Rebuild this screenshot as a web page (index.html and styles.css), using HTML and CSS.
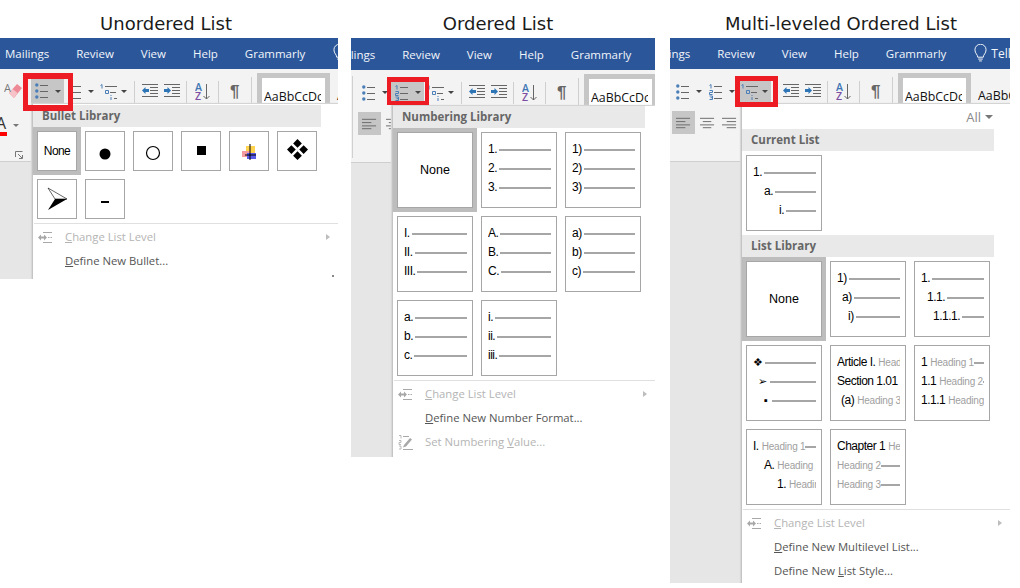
FILE: index.html
```html
<!DOCTYPE html>
<html lang="en">
<head>
<meta charset="utf-8">
<title>Word list menus</title>
<link rel="stylesheet" href="styles.css">
</head>
<body>
<svg class="sprite" width="0" height="0" aria-hidden="true">
  <symbol id="ic-bullets" viewBox="0 0 13 16">
    <circle cx="1.800" cy="2" r="1.700" fill="#4a7fb8"/><circle cx="1.800" cy="8" r="1.700" fill="#4a7fb8"/><circle cx="1.800" cy="14" r="1.700" fill="#4a7fb8"/>
    <path d="M5 2.500h8M5 8.500h8M5 14.500h8" stroke="#666" stroke-width="1"/>
  </symbol>
  <symbol id="ic-num" viewBox="0 0 13 16">
    <path d="M.5 1.500l1.500-1v4M.5 6.500h3v2h-3v2h3M.5 12h3v3.500h-3M1.500 13.700h2" fill="none" stroke="#4a7fb8" stroke-width="1"/>
    <path d="M5 2.500h8M5 8.500h8M5 14.500h8" stroke="#666" stroke-width="1"/>
  </symbol>
  <symbol id="ic-multi" viewBox="0 0 18 16">
    <path d="M.5 1.500l1.500-1v4" fill="none" stroke="#4a7fb8" stroke-width="1"/>
    <path d="M5.500 6.500h3v3h-3z" fill="none" stroke="#4a7fb8" stroke-width="1"/>
    <path d="M11 11v1M11 13v3" stroke="#4a7fb8" stroke-width="1"/>
    <path d="M5 2.500h12M10 8.500h6M14 14.500h3" stroke="#666" stroke-width="1"/>
  </symbol>
  <symbol id="ic-outdent" viewBox="0 0 16 13">
    <path d="M0 .5h16M0 12.500h16M8 3.500h8M8 6.500h8M8 9.500h8" stroke="#666" stroke-width="1"/>
    <path d="M0 6.500l3.500-3.500v2H7v3H3.500v2z" fill="#2e75b6"/>
  </symbol>
  <symbol id="ic-indent" viewBox="0 0 16 13">
    <path d="M0 .5h16M0 12.500h16M8 3.500h8M8 6.500h8M8 9.500h8" stroke="#666" stroke-width="1"/>
    <path d="M7 6.500L3.500 3v2H0v3h3.500v2z" fill="#2e75b6"/>
  </symbol>
  <symbol id="ic-left" viewBox="0 0 16 12">
    <path d="M0 1h15M0 4.500h10M0 8h15M0 11h10" stroke="#666" stroke-width="1"/>
  </symbol>
  <symbol id="ic-center" viewBox="0 0 16 12">
    <path d="M0 1h15M3 4.500h9M0 8h15M3 11h9" stroke="#666" stroke-width="1"/>
  </symbol>
  <symbol id="ic-right" viewBox="0 0 16 12">
    <path d="M0 1h15M5 4.500h10M0 8h15M5 11h10" stroke="#666" stroke-width="1"/>
  </symbol>
  <symbol id="ic-level" viewBox="0 0 15 11">
    <path d="M5 .5h9M10 5.500h1.500M12.500 5.500h1.500M5 10.500h9" stroke="#a8a8a8" stroke-width="1"/>
    <path d="M0 5.500l3-3v2h3v-2l3 3-3 3v-2H3v2z" fill="#a8a8a8"/>
  </symbol>
  <symbol id="ic-setnum" viewBox="0 0 15 15">
    <path d="M1 .5h2v3M1 5.500h2v2H1v2h2M1 11h2v3H1" fill="none" stroke="#a8a8a8" stroke-width=".8"/>
    <path d="M5 1.500h6M5 14.500h10" stroke="#a8a8a8"/>
    <path d="M6 10l6-7 2 1.500-6 7-3 1z" fill="#a8a8a8"/>
  </symbol>
  <symbol id="ic-dia" viewBox="0 0 24 24">
    <path d="M12 0l5 5-5 5-5-5zM12 14l5 5-5 5-5-5zM0 12l5-5 5 5-5 5zM14 12l5-5 5 5-5 5z" fill="#000"/>
  </symbol>
</svg>

<main class="page">

  <section class="col col-a">
    <h2 class="title title-a">Unordered List</h2>
    <div class="window win-a">
      <nav class="tabs tabs-a"><span>Mailings</span><span>Review</span><span>View</span><span>Help</span><span>Grammarly</span>
        <svg class="bulb" viewBox="0 0 14 20"><path d="M4 14c0-3-3-4-3-8a6 6 0 0 1 12 0c0 4-3 5-3 8zM4.500 16h5M5.500 18h3" fill="none" stroke="#fff" stroke-width="1"/></svg>
      </nav>
      <div class="ribbon">
        <div class="rib-inner">
          <div class="rib-row">
            <div class="slot-eraser">
              <svg class="eraser" viewBox="0 0 18 18"><path d="M5 11l8-9 5 4-8 10z" fill="#ee8a95"/><path d="M5 11l3.500-4 5 4-3.500 5z" fill="#f5c3c8"/><text x="0" y="10" class="eraser-a">A</text></svg>
            </div>
            <div class="rbtn pick pick-a"><svg class="ric" ><use href="#ic-bullets"/></svg><b class="caret"></b></div>
            <div class="rbtn"><svg class="ric" ><use href="#ic-num"/></svg><b class="caret"></b></div>
            <div class="rbtn"><svg class="ric wide" ><use href="#ic-multi"/></svg><b class="caret"></b></div>
            <i class="vsep s1"></i>
            <svg class="ric2 ml7"><use href="#ic-outdent"/></svg>
            <svg class="ric2 ml6"><use href="#ic-indent"/></svg>
            <i class="vsep s2"></i>
            <svg class="sort" viewBox="0 0 16 18"><text x="0" y="8" class="az-a">A</text><text x="0" y="17" class="az-z">Z</text><path d="M11.500 1v15M8.500 13l3 3 3-3" fill="none" stroke="#666"/></svg>
            <i class="vsep s3"></i>
            <span class="pil">¶</span>
            <i class="vsep s4"></i>
            <div class="gal"><span>AaBbCcDc</span></div>
            <div class="gal2"><span>AaBbCcDc</span></div>
          </div>
          <div class="rib-row2">
            <div class="font-a"><span class="fa">A</span><b class="caret dim"></b></div>
            <div class="albtn on"><svg class="aic"><use href="#ic-left"/></svg></div>
            <div class="albtn"><svg class="aic"><use href="#ic-center"/></svg></div>
            <div class="albtn"><svg class="aic"><use href="#ic-right"/></svg></div>
          </div>
          <svg class="launch" viewBox="0 0 8 8"><path d="M.5 6V.5H7.500M3 3l4 4M7.500 4v3.500H4" fill="none" stroke="#777"/></svg>
        </div>
      </div>
      <div class="menu menu-a">
        <h3 class="mhead head-a">Bullet Library</h3>
        <div class="bullets">
          <div class="btile sel none-s">None</div>
          <div class="btile"><svg class="bi" viewBox="0 0 38 38"><circle cx="19" cy="22" r="5.500"/></svg></div>
          <div class="btile"><svg class="bi" viewBox="0 0 38 38"><circle cx="19" cy="21" r="6.500" fill="none" stroke="#000" stroke-width="1.200"/></svg></div>
          <div class="btile"><svg class="bi" viewBox="0 0 38 38"><path d="M15 14h9v9h-9z"/></svg></div>
          <div class="btile"><svg class="bi" viewBox="0 0 38 38"><path d="M16 14h9v8h-9z" fill="#ffd34d"/><path d="M12 19h8v6h-8z" fill="#f59aa0"/><path d="M17 21h9v6h-9z" fill="#5b5bea"/><path d="M20 12v16M15 23h11" stroke="#000"/></svg></div>
          <div class="btile"><svg class="bd"><use href="#ic-dia"/></svg></div>
          <div class="btile"><svg class="bi" viewBox="0 0 38 38"><path d="M10 8l19 11H17z" fill="#fff" stroke="#000" stroke-width=".6"/><path d="M29 19L10 30l7-11z"/></svg></div>
          <div class="btile"><svg class="bi" viewBox="0 0 38 38"><path d="M15 21h8v2h-8z"/></svg></div>
        </div>
        <hr class="msep">
        <ul class="items">
          <li class="item off"><svg class="mic"><use href="#ic-level"/></svg><span><u>C</u>hange List Level</span><b class="sub"></b></li>
          <li class="item"><span><u>D</u>efine New Bullet...</span></li>
        </ul>
        <i class="dot"></i>
      </div>
      <div class="redbox red-a"></div>
    </div>
  </section>

  <section class="col col-b">
    <h2 class="title title-b">Ordered List</h2>
    <div class="window win-b">
      <nav class="tabs tabs-b tall"><span>Mailings</span><span>Review</span><span>View</span><span>Help</span><span>Grammarly</span></nav>
      <div class="ribbon shift-b">
        <i class="lsep"></i>
        <div class="rib-inner">
          <div class="rib-row">
            <div class="slot-eraser"></div>
            <div class="rbtn"><svg class="ric" ><use href="#ic-bullets"/></svg><b class="caret"></b></div>
            <div class="rbtn pick"><svg class="ric" ><use href="#ic-num"/></svg><b class="caret"></b></div>
            <div class="rbtn"><svg class="ric wide" ><use href="#ic-multi"/></svg><b class="caret"></b></div>
            <i class="vsep s1"></i>
            <svg class="ric2 ml7"><use href="#ic-outdent"/></svg>
            <svg class="ric2 ml6"><use href="#ic-indent"/></svg>
            <i class="vsep s2"></i>
            <svg class="sort" viewBox="0 0 16 18"><text x="0" y="8" class="az-a">A</text><text x="0" y="17" class="az-z">Z</text><path d="M11.500 1v15M8.500 13l3 3 3-3" fill="none" stroke="#666"/></svg>
            <i class="vsep s3"></i>
            <span class="pil">¶</span>
            <i class="vsep s4"></i>
            <div class="gal"><span>AaBbCcDc</span></div>
          </div>
          <div class="rib-row2">
            <div class="font-a"></div>
            <div class="albtn on"><svg class="aic"><use href="#ic-left"/></svg></div>
            <div class="albtn"><svg class="aic"><use href="#ic-center"/></svg></div>
          </div>
        </div>
      </div>
      <div class="menu menu-b">
        <h3 class="mhead head-b">Numbering Library</h3>
        <div class="lib">
          <div class="tile sel center">None</div>
          <div class="tile"><p class="row"><span>1.</span><i></i></p><p class="row"><span>2.</span><i></i></p><p class="row"><span>3.</span><i></i></p></div>
          <div class="tile"><p class="row"><span>1)</span><i></i></p><p class="row"><span>2)</span><i></i></p><p class="row"><span>3)</span><i></i></p></div>
          <div class="tile"><p class="row"><span>I.</span><i></i></p><p class="row"><span>II.</span><i></i></p><p class="row"><span>III.</span><i></i></p></div>
          <div class="tile"><p class="row"><span>A.</span><i></i></p><p class="row"><span>B.</span><i></i></p><p class="row"><span>C.</span><i></i></p></div>
          <div class="tile"><p class="row"><span>a)</span><i></i></p><p class="row"><span>b)</span><i></i></p><p class="row"><span>c)</span><i></i></p></div>
          <div class="tile"><p class="row"><span>a.</span><i></i></p><p class="row"><span>b.</span><i></i></p><p class="row"><span>c.</span><i></i></p></div>
          <div class="tile"><p class="row"><span>i.</span><i></i></p><p class="row"><span>ii.</span><i></i></p><p class="row"><span>iii.</span><i></i></p></div>
        </div>
        <hr class="msep">
        <ul class="items">
          <li class="item off"><svg class="mic"><use href="#ic-level"/></svg><span><u>C</u>hange List Level</span><b class="sub"></b></li>
          <li class="item"><span><u>D</u>efine New Number Format...</span></li>
          <li class="item off"><svg class="mic tall-ic"><use href="#ic-setnum"/></svg><span>Set Numbering <u>V</u>alue...</span></li>
        </ul>
      </div>
      <div class="redbox red-b"></div>
    </div>
  </section>

  <section class="col col-c">
    <h2 class="title title-c">Multi-leveled Ordered List</h2>
    <div class="window win-c">
      <nav class="tabs tabs-c"><span>Mailings</span><span>Review</span><span>View</span><span>Help</span><span>Grammarly</span>
        <svg class="bulb" viewBox="0 0 14 20"><path d="M4 14c0-3-3-4-3-8a6 6 0 0 1 12 0c0 4-3 5-3 8zM4.500 16h5M5.500 18h3" fill="none" stroke="#fff" stroke-width="1"/></svg>
        <span class="tell">Tell</span>
      </nav>
      <div class="ribbon shift-c">
        <div class="rib-inner">
          <div class="rib-row">
            <div class="slot-eraser"></div>
            <div class="rbtn"><svg class="ric" ><use href="#ic-bullets"/></svg><b class="caret"></b></div>
            <div class="rbtn"><svg class="ric" ><use href="#ic-num"/></svg><b class="caret"></b></div>
            <div class="rbtn pick"><svg class="ric wide" ><use href="#ic-multi"/></svg><b class="caret"></b></div>
            <i class="vsep s1"></i>
            <svg class="ric2 ml7"><use href="#ic-outdent"/></svg>
            <svg class="ric2 ml6"><use href="#ic-indent"/></svg>
            <i class="vsep s2"></i>
            <svg class="sort" viewBox="0 0 16 18"><text x="0" y="8" class="az-a">A</text><text x="0" y="17" class="az-z">Z</text><path d="M11.500 1v15M8.500 13l3 3 3-3" fill="none" stroke="#666"/></svg>
            <i class="vsep s3"></i>
            <span class="pil">¶</span>
            <i class="vsep s4"></i>
            <div class="gal"><span>AaBbCcDc</span></div>
            <div class="gal2"><span>AaBbCcDc</span></div>
          </div>
          <div class="rib-row2">
            <div class="font-a"></div>
            <div class="albtn on"><svg class="aic"><use href="#ic-left"/></svg></div>
            <div class="albtn"><svg class="aic"><use href="#ic-center"/></svg></div>
            <div class="albtn"><svg class="aic"><use href="#ic-right"/></svg></div>
          </div>
        </div>
      </div>
      <div class="menu menu-c">
        <div class="allrow"><span>All</span><b class="caret dim"></b></div>
        <h3 class="mhead head-c">Current List</h3>
        <div class="lib lib-one">
          <div class="tile"><p class="row"><span>1.</span><i></i></p><p class="row p11"><span>a.</span><i></i></p><p class="row p26"><span>i.</span><i></i></p></div>
        </div>
        <h3 class="mhead head-c">List Library</h3>
        <div class="lib">
          <div class="tile sel center">None</div>
          <div class="tile"><p class="row"><span>1)</span><i></i></p><p class="row p5"><span>a)</span><i></i></p><p class="row p11"><span>i)</span><i></i></p></div>
          <div class="tile"><p class="row"><span>1.</span><i></i></p><p class="row p6"><span>1.1.</span><i></i></p><p class="row p12"><span>1.1.1.</span><i></i></p></div>
          <div class="tile"><p class="row"><span class="g">❖</span><i></i></p><p class="row p5"><span class="g">➢</span><i></i></p><p class="row p11"><span class="g gs">▪</span><i></i></p></div>
          <div class="tile"><p class="row"><span>Article I.</span><em>Heading 1</em></p><p class="row"><span>Section 1.01</span><em>Heading 2</em></p><p class="row p4"><span>(a)</span><em>Heading 3</em><i></i></p></div>
          <div class="tile"><p class="row"><span>1</span><em>Heading 1</em><i></i></p><p class="row"><span>1.1</span><em>Heading 2</em><i></i></p><p class="row"><span>1.1.1</span><em>Heading 3</em></p></div>
          <div class="tile"><p class="row"><span>I.</span><em>Heading 1</em><i></i></p><p class="row p11"><span>A.</span><em>Heading 2</em></p><p class="row p24"><span>1.</span><em>Heading 3</em></p></div>
          <div class="tile"><p class="row"><span>Chapter 1</span><em>Heading 1</em></p><p class="row"><em class="flush">Heading 2</em><i></i></p><p class="row"><em class="flush">Heading 3</em><i></i></p></div>
        </div>
        <hr class="msep">
        <ul class="items">
          <li class="item off"><svg class="mic"><use href="#ic-level"/></svg><span><u>C</u>hange List Level</span><b class="sub"></b></li>
          <li class="item"><span><u>D</u>efine New Multilevel List...</span></li>
          <li class="item"><span>Define New <u>L</u>ist Style...</span></li>
        </ul>
      </div>
      <div class="redbox red-c"></div>
    </div>
  </section>

</main>
</body>
</html>
```
FILE: styles.css
```css
* { box-sizing: border-box; }
html, body { margin: 0; padding: 0; background: #fff; }
body { width: 1020px; height: 588px; overflow: hidden; font-family: "Open Sans", "Liberation Sans", sans-serif; }
.sprite { position: absolute; }
p, h2, h3, ul, hr { margin: 0; padding: 0; }

.page { display: flex; align-items: flex-start; }
.col-a { width: 338px; }
.col-b { width: 304px; margin-left: 13px; }
.col-c { width: 340px; margin-left: 15px; }

.title { height: 38px; padding-top: 4px; font: 400 18px/40px "DejaVu Sans", sans-serif; color: #1a1a1a; text-align: center; white-space: nowrap; }
.title-a { padding-right: 6px; }
.title-b { padding-right: 10px; }
.title-c { padding-left: 2px; }

.window { position: relative; overflow: hidden; background: #e6e6e6; }
.win-a { height: 241px; }
.win-b { height: 419px; }
.win-c { height: 545px; }

.tabs { display: flex; align-items: center; gap: 27px; height: 31px; background: #2b579a; color: #f2f5fa; font-size: 11.5px; white-space: nowrap; padding-left: 5px; }
.tabs.tall { height: 32px; }
.tabs-b { padding-left: 0; }
.tabs-b span:first-child { margin-left: -20px; }
.tabs-c { padding-left: 0; }
.tabs-c span:first-child { margin-left: -24px; }
.bulb { width: 13px; height: 19px; flex: none; margin-left: 1px; }
.tell { margin-left: -23px; font-size: 12px; }

.ribbon { display: flex; height: 93px; background: #f3f3f3; border-bottom: 1px solid #cfcfcf; overflow: hidden; }
.rib-inner { position: relative; flex: none; width: 460px; }
.shift-b .rib-inner { margin-left: -26px; }
.shift-c .rib-inner { margin-left: -29px; }
.lsep { flex: none; width: 1px; margin: 6px 0 4px 1px; background: #d0d0d0; }

.rib-row { display: flex; align-items: flex-start; height: 42px; padding-top: 4px; }
.slot-eraser { width: 31px; flex: none; }
.eraser { display: block; width: 18px; height: 18px; margin: 9px 0 0 4px; }
.eraser-a { font-size: 11px; fill: #7a7a7a; }

.rbtn { position: relative; display: flex; align-items: center; flex: none; width: 33px; height: 21px; margin-top: 8px; padding-left: 4px; }
.rbtn.pick { background: #c6c6c6; }
.rbtn.pick-a { height: 24px; margin-top: 6px; }
.ric { width: 13px; height: 16px; flex: none; }
.ric.wide { width: 18px; margin-left: -1px; }
.caret { display: block; flex: none; width: 0; height: 0; border-style: solid; border-width: 3px 3px 0; border-color: #444 transparent transparent; margin-left: 7px; }
.wide + .caret { margin-left: 3px; }
.caret.dim { border-color: #777 transparent transparent; }

.vsep { display: block; flex: none; width: 1px; height: 22px; margin-top: 8px; background: #cfcfcf; }
.s1 { margin-left: 4px; }
.s2 { margin-left: 6px; }
.s3 { margin-left: 7px; }
.s4 { margin-left: 9px; height: 30px; margin-top: 4px; }

.ric2 { flex: none; width: 16px; height: 13px; margin-top: 11px; }
.ml7 { margin-left: 7px; }
.ml6 { margin-left: 6px; }

.sort { flex: none; width: 16px; height: 18px; margin: 10px 0 0 8px; }
.az-a { font-size: 10.5px; fill: #3f76b5; font-weight: 600; }
.az-z { font-size: 10.5px; fill: #7b4ea3; font-weight: 600; }
.pil { flex: none; width: 12px; margin: 6px 0 0 11px; font: 700 17px/26px "Liberation Sans", sans-serif; color: #666; }

.gal, .gal2 { flex: none; width: 73px; height: 40px; background: #fff; font-size: 12.4px; color: #111; overflow: hidden; white-space: nowrap; padding: 14px 6px 0 7px; line-height: 18px; }
.gal { margin-left: 5px; border: 5px solid #c6c6c6; border-bottom: 0; padding: 10px 4px 0 2px; }
.gal span { display: block; overflow: hidden; }
.gal2 { background: transparent; padding-left: 7px; }

.rib-row2 { display: flex; height: 23px; }
.font-a { display: flex; align-items: flex-end; width: 31px; flex: none; overflow: hidden; height: 25px; }
.fa { display: block; font: 400 16px/18px "Open Sans", sans-serif; color: #333; width: 7px; text-indent: -4px; border-bottom: 4px solid #f00; height: 22px; overflow: visible; white-space: nowrap; }
.font-a .caret { margin: 0 0 9px 6px; }
.albtn { display: flex; align-items: center; justify-content: center; flex: none; width: 24px; height: 23px; }
.aic { width: 15px; height: 12px; }
.albtn.on { background: #c6c6c6; width: 23px; }
.albtn + .albtn { margin: 0 0 0 2px; width: 20px; }
.albtn + .albtn + .albtn { margin-left: 2px; }
.launch { position: absolute; left: 15px; top: 82px; width: 8px; height: 8px; }

.menu { position: absolute; top: 65px; right: 0; bottom: 0; background: #fff; border-left: 1px solid #c4c4c4; border-top: 1px solid #d4d4d4; box-shadow: -1px 0 1px #d8d8d8; }
.menu-a { left: 32px; }
.menu-b { left: 41px; top: 67px; }
.menu-c { left: 71px; }

.mhead { height: 22px; background: #e9e9e9; color: #666; font-size: 11.5px; font-weight: 700; line-height: 22px; padding-left: 9px; }
.head-a { width: 288px; margin-top: 1px; }
.head-b { width: 252px; }
.head-c { width: 252px; margin-top: 4px; }
.allrow + .head-c { margin-top: 0; }

.allrow { display: flex; justify-content: flex-end; align-items: center; height: 25px; width: 252px; font-size: 13px; color: #8a8a8a; }
.allrow .caret { margin: 0 1px 0 4px; border-width: 4px 4px 0; }

.bullets { display: grid; grid-template-columns: repeat(6, 40px); gap: 8px; padding: 4px 0 0 4px; }
.btile { width: 40px; height: 40px; border: 1px solid #a6a6a6; background: #fff; display: flex; align-items: center; justify-content: center; }
.sel { box-shadow: 0 0 0 4px #bdbdbd; }
.none-s { font: 400 12px/1 "Liberation Sans", sans-serif; letter-spacing: -.6px; color: #000; }
.bi { width: 38px; height: 38px; }
.bd { width: 21px; height: 21px; margin-top: -4px; }

.lib { display: grid; grid-template-columns: repeat(3, 76px); grid-auto-rows: 76px; gap: 8px; padding: 4px 0 0 4px; }
.tile { width: 76px; height: 76px; border: 1px solid #a6a6a6; background: #fff; padding: 7px 5px 0 6px; overflow: hidden; }
.tile.center { display: flex; align-items: center; justify-content: center; padding: 1px 0 0; font: 400 12.500px/1 "Liberation Sans", sans-serif; color: #000; }
.row { display: flex; align-items: center; height: 19px; font: 400 12px/19px "Liberation Sans", sans-serif; letter-spacing: -.5px; color: #000; white-space: nowrap; overflow: hidden; }
.row span { flex: none; }
.row i { flex: 1 1 0; min-width: 0; height: 2px; background: #a6a6a6; margin-left: 2px; }
.row em { flex: none; font: 400 10px/19px "Liberation Sans", sans-serif; letter-spacing: -.2px; color: #a0a0a0; margin-left: 3px; }
.row em + i { margin-left: 0; }
.row em.flush { margin-left: 0; }
.row .g { width: 10px; font-size: 11px; letter-spacing: 0; }
.row .gs { width: 6px; }
.p4 { padding-left: 4px; }
.p5 { padding-left: 5px; }
.p6 { padding-left: 6px; }
.p11 { padding-left: 11px; }
.p12 { padding-left: 12px; }
.p24 { padding-left: 24px; }
.p26 { padding-left: 26px; }

.msep { border: 0; height: 1px; background: #e0e0e0; margin: 4px 0 0 1px; }
.items { list-style: none; padding-top: 1px; }
.item { position: relative; height: 24px; line-height: 24px; padding-left: 32px; font-size: 11.3px; color: #555; white-space: nowrap; }
.item.off { color: #b4b4b4; }
.mic { position: absolute; left: 5px; top: 7px; width: 15px; height: 11px; }
.tall-ic { height: 15px; top: 5px; }
.sub { position: absolute; right: 8px; top: 9px; width: 0; height: 0; border-style: solid; border-width: 3.500px 0 3.500px 4px; border-color: transparent transparent transparent #bdbdbd; }
.dot { position: absolute; right: 4px; bottom: 2px; width: 2px; height: 2px; background: #888; }

.redbox { position: absolute; border-style: solid; border-color: #ed1c24; z-index: 5; }
.red-a { left: 23px; top: 35px; width: 50px; height: 38px; border-width: 6px 5px; }
.red-b { left: 36px; top: 39px; width: 42px; height: 28px; border-width: 5px 4px 4px; }
.red-c { left: 65px; top: 38px; width: 43px; height: 31px; border-width: 5px; }
```
